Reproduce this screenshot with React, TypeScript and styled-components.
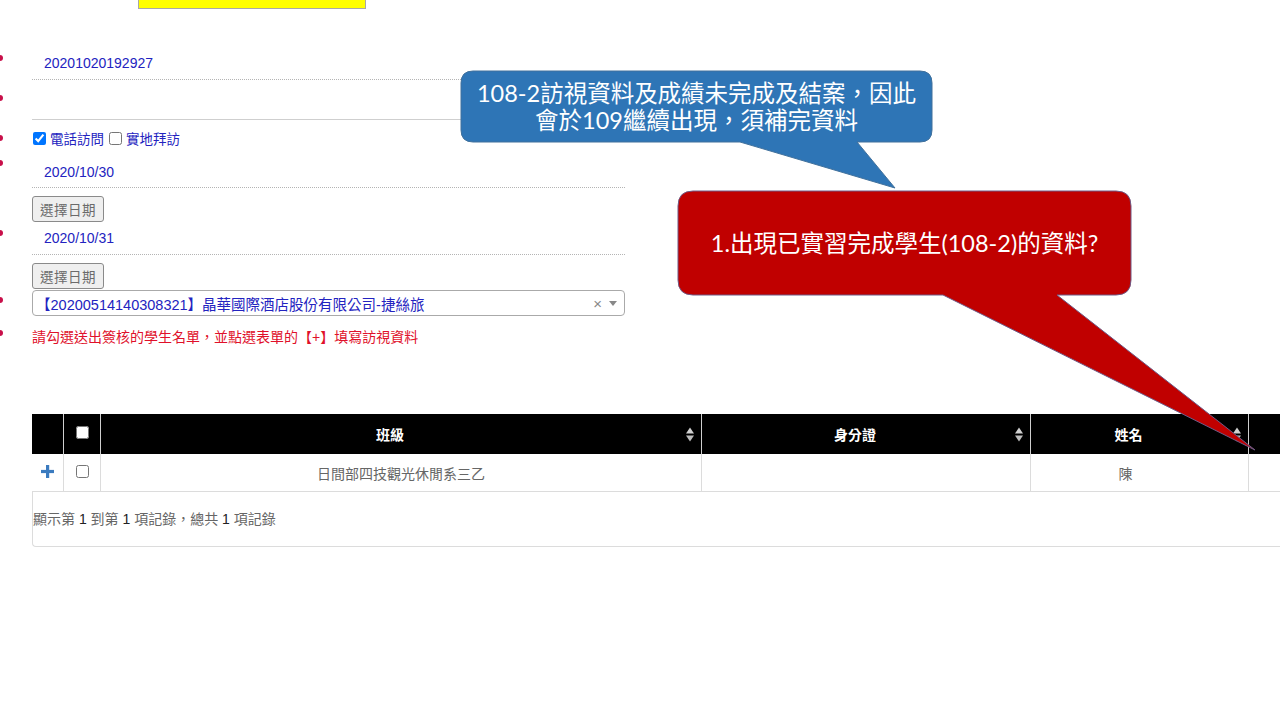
import React from "react";
import styled, { createGlobalStyle } from "styled-components";

const GlobalStyle = createGlobalStyle`
  html, body {
    margin: 0;
    padding: 0;
    background: #fff;
    overflow: hidden;
  }
  body {
    font-family: "Liberation Sans", "Noto Sans CJK TC", sans-serif;
    font-size: 14px;
    color: #333;
  }
`;

const Page = styled.div`
  position: relative;
  width: 1280px;
  height: 720px;
  overflow: hidden;
`;

const TopBar = styled.div`
  padding-left: 138px;
  height: 9px;
`;

const YellowTab = styled.div`
  width: 226px;
  height: 8px;
  background: #ffff00;
  border: 1px solid #a8a8a8;
  border-top: none;
`;

const Form = styled.div`
  margin-top: 37px;
  display: flex;
  flex-direction: column;
`;

const Row = styled.div`
  display: flex;
`;

const MarkerCell = styled.div`
  width: 32px;
  flex-shrink: 0;
`;

const Dot = styled.div<{ $offset: number }>`
  width: 6px;
  height: 6px;
  border-radius: 50%;
  background: #c8104a;
  margin-left: -3px;
  margin-top: ${(p) => p.$offset - 3}px;
`;

const Field = styled.div<{ $h: number; $line?: "dotted" | "solid" }>`
  width: 593px;
  height: ${(p) => p.$h}px;
  display: flex;
  align-items: center;
  border-bottom: ${(p) =>
    p.$line === "dotted"
      ? "1px dotted #b4b4b4"
      : p.$line === "solid"
      ? "1px solid #cfcfcf"
      : "none"};
`;

const Value = styled.span`
  padding-left: 12px;
  color: #2323c0;
  font-size: 14px;
`;

const CheckGroup = styled.label`
  display: flex;
  align-items: center;
  gap: 4px;
  margin-right: 5px;
  color: #2323c0;
  font-size: 13.5px;
  &:first-child {
    padding-left: 1px;
  }
`;

const Check = styled.input`
  margin: 0;
  width: 13px;
  height: 13px;
`;

const PickButton = styled.button`
  display: block;
  margin-top: 8px;
  width: 72px;
  height: 26px;
  padding: 0;
  background: #efefef;
  border: 1px solid #8a8a8a;
  border-radius: 3px;
  color: #6b6b6b;
  font-family: "Liberation Sans", "Noto Sans CJK TC", sans-serif;
  font-size: 13.5px;
  letter-spacing: 0.5px;
`;

const Select = styled.div`
  margin-top: 1px;
  width: 591px;
  height: 24px;
  border: 1px solid #aaa;
  border-radius: 4px;
  display: flex;
  align-items: center;
`;

const SelectText = styled.span`
  flex: 1;
  padding-left: 3px;
  color: #2323c0;
  font-size: 14.5px;
  white-space: nowrap;
  overflow: hidden;
`;

const Clear = styled.span`
  color: #888;
  font-size: 15px;
  margin-right: 7px;
`;

const Caret = styled.span`
  width: 0;
  height: 0;
  border-left: 4px solid transparent;
  border-right: 4px solid transparent;
  border-top: 5px solid #888;
  margin-right: 7px;
`;

const Hint = styled.div`
  margin-top: 11px;
  line-height: 20px;
  color: #e0102a;
  font-size: 14px;
`;

const TableWrap = styled.div`
  margin-top: 67px;
  margin-left: 32px;
  width: 1320px;
`;

const Table = styled.table`
  border-collapse: collapse;
  table-layout: fixed;
  width: 1312px;
`;

const Head = styled.th<{ $w: number }>`
  width: ${(p) => p.$w}px;
  height: 40px;
  padding: 0;
  background: #000;
  color: #fff;
  font-weight: bold;
  font-size: 14px;
  border-left: 1px solid #cfcfcf;
  &:first-child {
    border-left: none;
  }
`;

const HeadInner = styled.div`
  display: flex;
  align-items: center;
  padding: 0 7px 0 8px;
`;

const HeadLabel = styled.span`
  flex: 1;
  text-align: center;
  margin-right: 15px;
`;

const Cell = styled.td`
  height: 37px;
  padding: 0;
  text-align: center;
  color: #666;
  font-size: 14px;
  border-bottom: 1px solid #dcdcdc;
  border-left: 1px solid #dcdcdc;
  &:first-child {
    border-left: none;
  }
`;

const Masked = styled.span`
  visibility: hidden;
`;

const Footer = styled.div`
  width: 1320px;
  height: 55px;
  border-left: 1px solid #dcdcdc;
  border-bottom: 1px solid #dcdcdc;
  border-bottom-left-radius: 4px;
  box-sizing: border-box;
  padding-top: 17px;
  line-height: 20px;
  color: #666;
  font-size: 14px;
  b {
    font-weight: normal;
    color: #222;
  }
`;

const Callout = styled.div<{ $x: number; $y: number; $w: number; $h: number }>`
  position: absolute;
  left: ${(p) => p.$x}px;
  top: ${(p) => p.$y}px;
  width: ${(p) => p.$w}px;
  height: ${(p) => p.$h}px;
`;

const CalloutShape = styled.svg`
  position: absolute;
  left: 0;
  top: 0;
  overflow: visible;
`;

const CalloutText = styled.div<{ $size: number }>`
  position: relative;
  height: 100%;
  display: flex;
  align-items: center;
  justify-content: center;
  text-align: center;
  color: #fff;
  font-family: "Lato", "Noto Sans CJK TC", sans-serif;
  font-size: ${(p) => p.$size}px;
  line-height: 27px;
  white-space: nowrap;
`;

const SortIcon = () => (
  <svg width="8" height="15" viewBox="0 0 8 15">
    <polygon points="0,6.5 4,0.5 8,6.5" fill="#d0d0d0" />
    <polygon points="0,8.5 4,14.5 8,8.5" fill="#bdbdbd" />
  </svg>
);

const PlusIcon = () => (
  <svg width="13" height="13" viewBox="0 0 13 13">
    <rect x="5" y="0" width="3.2" height="13" fill="#3b7bbf" />
    <rect x="0" y="4.9" width="13" height="3.2" fill="#3b7bbf" />
  </svg>
);

// rounded box + pointer, as one outline
const bubblePath = (
  w: number,
  h: number,
  r: number,
  x1: number,
  x2: number,
  tx: number,
  ty: number
) =>
  `M${r},0 H${w - r} Q${w},0 ${w},${r} V${h - r} Q${w},${h} ${w - r},${h} ` +
  `H${x2} L${tx},${ty} L${x1},${h} H${r} Q0,${h} 0,${h - r} V${r} Q0,0 ${r},0 Z`;

const App: React.FC = () => {
  return (
    <Page>
      <GlobalStyle />
      <TopBar>
        <YellowTab />
      </TopBar>

      <Form>
        <Row>
          <MarkerCell>
            <Dot $offset={12} />
          </MarkerCell>
          <Field $h={33} $line="dotted">
            <Value>20201020192927</Value>
          </Field>
        </Row>
        <Row>
          <MarkerCell>
            <Dot $offset={18} />
          </MarkerCell>
          <Field $h={39} $line="solid" />
        </Row>
        <Row>
          <MarkerCell>
            <Dot $offset={18} />
          </MarkerCell>
          <Field $h={36}>
            <CheckGroup>
              <Check type="checkbox" defaultChecked />
              電話訪問
            </CheckGroup>
            <CheckGroup>
              <Check type="checkbox" />
              實地拜訪
            </CheckGroup>
          </Field>
        </Row>
        <Row>
          <MarkerCell>
            <Dot $offset={7} />
          </MarkerCell>
          <Field $h={31} $line="dotted">
            <Value>2020/10/30</Value>
          </Field>
        </Row>
        <Row>
          <MarkerCell />
          <div>
            <PickButton>選擇日期</PickButton>
          </div>
        </Row>
        <Row>
          <MarkerCell>
            <Dot $offset={11} />
          </MarkerCell>
          <Field $h={32} $line="dotted">
            <Value>2020/10/31</Value>
          </Field>
        </Row>
        <Row>
          <MarkerCell />
          <div>
            <PickButton>選擇日期</PickButton>
          </div>
        </Row>
        <Row>
          <MarkerCell>
            <Dot $offset={11} />
          </MarkerCell>
          <Select>
            <SelectText>【20200514140308321】晶華國際酒店股份有限公司-捷絲旅</SelectText>
            <Clear>×</Clear>
            <Caret />
          </Select>
        </Row>
        <Row>
          <MarkerCell>
            <Dot $offset={17} />
          </MarkerCell>
          <Hint>請勾選送出簽核的學生名單，並點選表單的【+】填寫訪視資料</Hint>
        </Row>
      </Form>

      <TableWrap>
        <Table>
          <thead>
            <tr>
              <Head $w={31} />
              <Head $w={36}>
                <Check type="checkbox" />
              </Head>
              <Head $w={600}>
                <HeadInner>
                  <HeadLabel>班級</HeadLabel>
                  <SortIcon />
                </HeadInner>
              </Head>
              <Head $w={328}>
                <HeadInner>
                  <HeadLabel>身分證</HeadLabel>
                  <SortIcon />
                </HeadInner>
              </Head>
              <Head $w={217}>
                <HeadInner>
                  <HeadLabel>姓名</HeadLabel>
                  <SortIcon />
                </HeadInner>
              </Head>
              <Head $w={100} />
            </tr>
          </thead>
          <tbody>
            <tr>
              <Cell>
                <PlusIcon />
              </Cell>
              <Cell>
                <Check type="checkbox" />
              </Cell>
              <Cell>日間部四技觀光休閒系三乙</Cell>
              <Cell />
              <Cell>
                陳<Masked>某某</Masked>
              </Cell>
              <Cell />
            </tr>
          </tbody>
        </Table>
        <Footer>
          顯示第 <b>1</b> 到第 <b>1</b> 項記錄，總共 <b>1</b> 項記錄
        </Footer>
      </TableWrap>

      <Callout $x={461} $y={71} $w={471} $h={71}>
        <CalloutShape width="471" height="118">
          <path
            d={bubblePath(471, 71, 12, 279, 396, 434, 117)}
            fill="#2e75b6"
            stroke="#41719c"
            strokeWidth="1"
          />
        </CalloutShape>
        <CalloutText $size={23.5}>
          108-2訪視資料及成績未完成及結案，因此
          <br />
          會於109繼續出現，須補完資料
        </CalloutText>
      </Callout>

      <Callout $x={678} $y={191} $w={453} $h={104}>
        <CalloutShape width="580" height="262">
          <path
            d={bubblePath(453, 104, 15, 265, 379, 577, 259)}
            fill="#c00000"
            stroke="#6f5a86"
            strokeWidth="1"
          />
        </CalloutShape>
        <CalloutText $size={23.5}>1.出現已實習完成學生(108-2)的資料?</CalloutText>
      </Callout>
    </Page>
  );
};

export default App;
